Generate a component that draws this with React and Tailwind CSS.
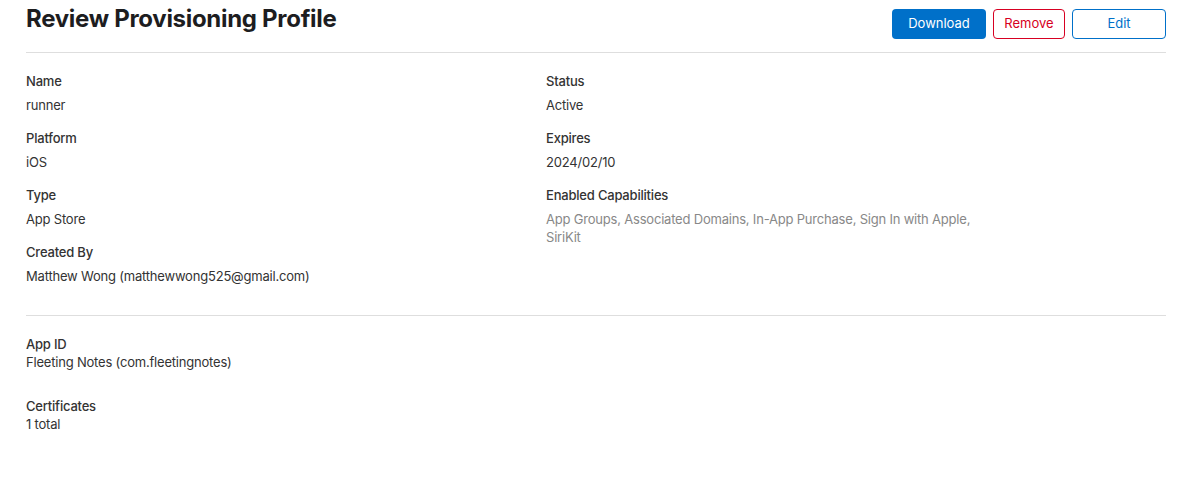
import React from 'react';

const Field = ({ label, children, muted }) => (
  <div className="mb-[15px]">
    <div className="text-[13px] leading-[18px] font-medium text-[#333] mb-[6px] tracking-[-0.2px]">{label}</div>
    <div className={`text-[13px] leading-[18px] tracking-[-0.2px] ${muted ? 'text-[#888]' : 'text-[#333]'}`}>{children}</div>
  </div>
);

const Summary = ({ label, value }) => (
  <div className="tracking-[-0.2px]">
    <div className="text-[13px] leading-[18px] font-medium text-[#333]">{label}</div>
    <div className="text-[13px] leading-[18px] text-[#333]">{value}</div>
  </div>
);

export default function App() {
  return (
    <div className="min-h-screen bg-white pl-[26px] pr-[18px] pt-[4px]" style={{ fontFamily: 'Inter, "Liberation Sans", sans-serif' }}>
      {/* Header */}
      <div className="flex justify-between items-start h-[49px] border-b border-[#dedede]">
        <h1 className="text-[24px] leading-[30px] font-bold text-[#1d1d1f] tracking-[-0.3px]">Review Provisioning Profile</h1>
        <div className="flex gap-[7px] mt-[5px]">
          <button className="h-[30px] w-[94px] rounded-[4px] bg-[#0070c9] text-white text-[13px]">Download</button>
          <button className="h-[30px] w-[72px] rounded-[4px] border border-[#d70022] text-[#d70022] text-[13px]">Remove</button>
          <button className="h-[30px] w-[94px] rounded-[4px] border border-[#0070c9] text-[#0070c9] text-[13px]">Edit</button>
        </div>
      </div>

      {/* Details */}
      <div className="flex pt-[19px] pb-[15px] border-b border-[#dedede]">
        <div className="w-[520px]">
          <Field label="Name">runner</Field>
          <Field label="Platform">iOS</Field>
          <Field label="Type">App Store</Field>
          <Field label="Created By">Matthew Wong (matthewwong525@gmail.com)</Field>
        </div>
        <div className="w-[440px]">
          <Field label="Status">Active</Field>
          <Field label="Expires">2024/02/10</Field>
          <Field label="Enabled Capabilities" muted>
            App Groups, Associated Domains, In-App Purchase, Sign In with Apple, SiriKit
          </Field>
        </div>
      </div>

      {/* App ID & Certificates */}
      <div className="pt-[19px] flex flex-col gap-[26px]">
        <Summary label="App ID" value="Fleeting Notes (com.fleetingnotes)" />
        <Summary label="Certificates" value="1 total" />
      </div>
    </div>
  );
}
